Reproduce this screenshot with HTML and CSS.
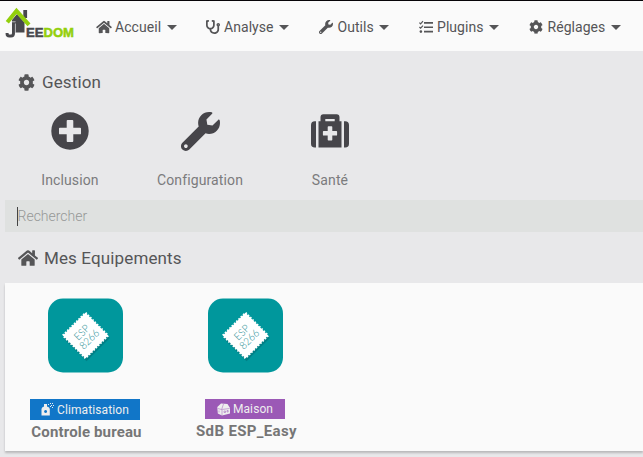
FILE: index.html
```html
<!DOCTYPE html>
<html lang="fr">
<head>
<meta charset="utf-8">
<title>Jeedom</title>
<link rel="stylesheet" href="styles.css">
</head>
<body>
<svg class="defs" aria-hidden="true">
  <symbol id="home" viewBox="0 0 576 512"><path d="M280.37 148.26L96 300.11V464a16 16 0 0 0 16 16l112.06-.29a16 16 0 0 0 15.92-16V368a16 16 0 0 1 16-16h64a16 16 0 0 1 16 16v95.64a16 16 0 0 0 16 16.05L464 480a16 16 0 0 0 16-16V300L295.67 148.26a12.19 12.19 0 0 0-15.3 0zM571.6 251.47L488 182.56V44.05a12 12 0 0 0-12-12h-56a12 12 0 0 0-12 12v72.61L318.47 43a48 48 0 0 0-61 0L4.34 251.47a12 12 0 0 0-1.6 16.9l25.5 31A12 12 0 0 0 45.15 301l235.22-193.74a12.19 12.19 0 0 1 15.3 0L530.9 301a12 12 0 0 0 16.9-1.6l25.5-31a12 12 0 0 0-1.7-16.93z"/></symbol>
  <symbol id="wrench" viewBox="0 0 512 512"><path d="M507.73 109.1c-2.24-9.03-13.54-12.09-20.12-5.51l-74.36 74.36-67.88-11.31-11.31-67.88 74.36-74.36c6.62-6.62 3.43-17.9-5.66-20.16-47.38-11.74-99.55.91-136.58 37.93-39.64 39.64-50.55 97.1-34.05 147.2L18.74 402.76c-24.99 24.99-24.99 65.51 0 90.5 24.99 24.99 65.51 24.99 90.5 0l213.21-213.21c50.12 16.71 107.47 5.68 147.37-34.22 37.07-37.07 49.7-89.32 37.91-136.73zM64 472c-13.25 0-24-10.75-24-24 0-13.26 10.75-24 24-24s24 10.74 24 24c0 13.25-10.75 24-24 24z"/></symbol>
  <symbol id="cog" viewBox="0 0 512 512"><path d="M487.4 315.7l-42.6-24.6c4.3-23.2 4.3-47 0-70.2l42.6-24.6c4.9-2.8 7.1-8.6 5.5-14-11.1-35.6-30-67.8-54.7-94.6-3.8-4.1-10-5.1-14.8-2.3L380.8 110c-17.9-15.4-38.5-27.3-60.8-35.1V25.8c0-5.6-3.9-10.5-9.4-11.7-36.7-8.2-74.3-7.8-109.2 0-5.5 1.2-9.4 6.1-9.4 11.7V75c-22.2 7.9-42.8 19.8-60.8 35.1L88.7 85.5c-4.9-2.8-11-1.9-14.8 2.3-24.7 26.7-43.6 58.9-54.7 94.6-1.7 5.4.6 11.2 5.5 14L67.3 221c-4.3 23.2-4.3 47 0 70.2l-42.6 24.6c-4.9 2.8-7.1 8.6-5.5 14 11.1 35.6 30 67.8 54.7 94.6 3.8 4.1 10 5.1 14.8 2.3l42.6-24.6c17.9 15.4 38.5 27.3 60.8 35.1v49.2c0 5.6 3.9 10.5 9.4 11.7 36.7 8.2 74.3 7.8 109.2 0 5.5-1.2 9.4-6.1 9.4-11.7v-49.2c22.2-7.9 42.8-19.8 60.8-35.1l42.6 24.6c4.9 2.8 11 1.9 14.8-2.3 24.7-26.7 43.6-58.9 54.7-94.6 1.5-5.5-.7-11.3-5.6-14.1zM256 336c-44.1 0-80-35.9-80-80s35.9-80 80-80 80 35.9 80 80-35.9 80-80 80z"/></symbol>
  <symbol id="stethoscope" viewBox="0 0 512 512"><path d="M447.1 112c-34.2.5-62.3 28.4-63 62.6-.5 24.3 12.5 45.6 32 56.8V344c0 57.3-50.2 104-112 104-60 0-109.2-44.1-111.9-99.2C265 333.8 320 269.2 320 192V36.6c0-11.4-8.1-21.3-19.3-23.5L237.8.5c-13-2.6-25.6 5.8-28.2 18.8L206.4 35c-2.6 13 5.8 25.6 18.8 28.2l30.7 6.1v121.4c0 52.9-42.2 96.7-95.1 97.2-53.4.5-96.9-42.7-96.9-96V69.4l30.7-6.1c13-2.6 21.4-15.2 18.8-28.2l-3.1-15.7C107.7 6.4 95.1-2 82.1.6L19.3 13C8.1 15.3 0 25.1 0 36.6V192c0 77.3 55.1 142 128.1 156.8C130.7 439.2 208.6 512 304 512c97 0 176-75.4 176-168V231.4c19.1-11.1 32-31.7 32-55.4 0-35.7-29.2-64.5-64.9-64zm.9 80c-8.8 0-16-7.2-16-16s7.2-16 16-16 16 7.2 16 16-7.2 16-16 16z"/></symbol>
  <symbol id="tasks" viewBox="0 0 14 14"><path d="M5 2.1h9v1.7H5zM5 6.4h9v1.7H5zM5 10.7h9v1.7H5z"/><path d="M.4 2.6l1.2 1.2L4 1.2M.4 7l1.2 1.2L4 5.6" fill="none" stroke="currentColor" stroke-width="1.2"/><circle cx="1.9" cy="11.6" r="1.3"/></symbol>
  <symbol id="plus" viewBox="0 0 38 38"><path fill-rule="evenodd" d="M19 .3a18.7 18.7 0 1 0 0 37.4a18.7 18.7 0 1 0 0-37.4zM16.600 8h4.800q.9 0 .9.9v6.800h6.800q.9 0 .9.9v4.800q0 .9-.9.9h-6.800v6.800q0 .9-.9.9h-4.800q-.9 0-.9-.9v-6.800H8.900q-.9 0-.9-.9v-4.800q0-.9.9-.9h6.800V8.900q0-.9.9-.9z"/></symbol>
  <symbol id="medkit" viewBox="0 0 38 34"><path fill-rule="evenodd" d="M7.500 7.200h2V3.200Q9.500.3 12.400.3h13.200q2.900 0 2.900 2.900v4h2V33.500h-23zM14.300 7.200h9.400V5h-9.400zM17.400 12.200q-.7 0-.7.700v4.100h-4.100q-.7 0-.7.700v3.200q0 .7.700.7h4.100v4.100q0 .7.700.7h3.200q.7 0 .7-.7v-4.100h4.100q.7 0 .7-.7v-3.200q0-.7-.7-.7h-4.100v-4.100q0-.7-.7-.7z"/><path d="M5 7.200v26.300H3.800Q0 33.500 0 29.700V11Q0 7.200 3.800 7.200zM33 7.200v26.300h1.200q3.800 0 3.800-3.800V11q0-3.800-3.800-3.800z"/></symbol>
  <symbol id="esp" viewBox="0 0 75 75">
    <rect y=".5" width="75" height="74" rx="15" fill="#00979c"/>
    <g transform="rotate(45 37.500 37.500)">
      <rect x="22" y="22" width="33" height="33" fill="#006e74" opacity=".55" transform="translate(1.500 0)"/>
      <rect x="21.500" y="21.500" width="32" height="32" fill="#fff"/>
      <rect x="21.500" y="21.500" width="32" height="32" fill="none" stroke="#fff" stroke-width="2.200" stroke-dasharray="1.600 1.600"/>
    </g>
    <g transform="translate(37.500 37.500) rotate(-45)" class="esp-text">
      <text x="-.5" y="-1.200" text-anchor="middle" textLength="17" lengthAdjust="spacingAndGlyphs">ESP</text>
      <text x="0" y="9" text-anchor="middle" textLength="23" lengthAdjust="spacingAndGlyphs">8266</text>
    </g>
  </symbol>
</svg>

<header class="navbar">
  <a class="brand">
    <svg width="72" height="38" viewBox="0 0 72 38">
      <path d="M17.300 3h3.800v8h-3.800z" fill="#48484c"/>
      <path d="M6 13L11 7L18.500 15.500V25.500H6z" fill="#48484c"/>
      <path d="M7.500 15.500v10.500q0 3-2.500 3H3.300q-2.200 0-2.200-1.900V26" fill="none" stroke="#48484c" stroke-width="3"/>
      <path d="M9.400 16.500v9.500M5.800 14.800h3.800" stroke="#d8d8da" stroke-width=".8"/>
      <path d="M1.300 15.300L10.500 3.800L23 17.800" fill="none" stroke="#93cf0c" stroke-width="4"/>
      <text class="brand-text" x="20" y="30" textLength="48" lengthAdjust="spacingAndGlyphs"><tspan fill="#48484c">EE</tspan><tspan fill="#93cf0c">DOM</tspan></text>
    </svg>
  </a>
  <nav class="menu">
    <a class="item"><svg class="ico home"><use href="#home"/></svg><span>Accueil</span><i class="caret"></i></a>
    <a class="item"><svg class="ico"><use href="#stethoscope"/></svg><span>Analyse</span><i class="caret"></i></a>
    <a class="item"><svg class="ico"><use href="#wrench"/></svg><span>Outils</span><i class="caret"></i></a>
    <a class="item"><svg class="ico"><use href="#tasks"/></svg><span>Plugins</span><i class="caret"></i></a>
    <a class="item"><svg class="ico"><use href="#cog"/></svg><span>Réglages</span><i class="caret"></i></a>
  </nav>
</header>

<main>
  <h2 class="legend"><svg class="legend-cog"><use href="#cog"/></svg><span>Gestion</span></h2>
  <div class="actions">
    <a class="action"><svg width="38" height="38"><use href="#plus"/></svg><span>Inclusion</span></a>
    <a class="action"><svg width="39" height="39"><use href="#wrench"/></svg><span>Configuration</span></a>
    <a class="action"><svg width="38" height="34"><use href="#medkit"/></svg><span>Santé</span></a>
  </div>
  <div class="search"><i class="cursor"></i><span>Rechercher</span></div>
  <h2 class="legend equipment-title"><svg class="legend-home"><use href="#home"/></svg><span>Mes Equipements</span></h2>
  <section class="equipment">
    <article class="card">
      <svg width="75" height="75"><use href="#esp"/></svg>
      <span class="tag climate"><svg width="13" height="13" viewBox="0 0 13 13"><path fill-rule="evenodd" d="M3 1h3v2.500q2.800.6 2.800 2.500v6.500H.5V6q0-1.900 2.500-2.500zM4.600 7a1.500 1.500 0 1 0 .01 0z"/><path d="M7 1h1v1H7zM9 0h1v1H9zM11 0h1v1h-1zM10 2h1v1h-1zM12 2h1v1h-1zM9 3h1v1H9zM11 4h1v1h-1z"/></svg><span>Climatisation</span></span>
      <strong>Controle bureau</strong>
    </article>
    <article class="card">
      <svg width="75" height="75"><use href="#esp"/></svg>
      <span class="tag house"><svg width="13" height="13" viewBox="0 0 13 13"><path d="M.3 4L4 .5l6.500.5L13 5v5.500L5 12.500.8 10.500z"/><path d="M.8 5.500l3.800 1 8-1M5 7v5M4.600 6.500L6.500 1M2 7.500v2M7 8h1.500v1.500H7zM10 7.500h1.200V9H10z" fill="none" stroke="#9b59b6" stroke-width=".5"/></svg><span>Maison</span></span>
      <strong class="spaced">SdB ESP_Easy</strong>
    </article>
  </section>
</main>
</body>
</html>
```

FILE: styles.css
```css
* { box-sizing: border-box; }

body {
  margin: 0;
  height: 457px;
  overflow: hidden;
  background: #e8e8ea;
  color: #555557;
  font: 14px/20px Roboto, sans-serif;
}

svg { display: block; fill: currentColor; flex: none; }
.defs { position: absolute; width: 0; height: 0; }

.navbar {
  display: flex;
  height: 51px;
  border-top: 1px solid #060408;
  background: #fafafa;
}
.brand { width: 90px; padding: 6px 0 0 6px; }
.brand svg { overflow: visible; }
.brand-text { font: bold 12.500px "Liberation Sans", sans-serif; stroke-width: .5px; }
.brand-text tspan:first-child { stroke: #48484c; }
.brand-text tspan:last-child { stroke: #93cf0c; }
.menu {
  display: grid;
  grid-template-columns: 110px 113.500px 99.500px 110.500px 100px;
  padding-left: 5.500px;
}
.item { display: flex; align-items: center; height: 52px; white-space: nowrap; letter-spacing: .05px; }
.ico { width: 14px; height: 14px; margin-right: 4.500px; }
.ico.home { width: 16px; margin-right: 3.500px; }
.caret {
  margin-left: 5.500px;
  border: solid transparent;
  border-width: 5px 5px 0;
  border-top-color: #555557;
}

.legend {
  display: flex;
  align-items: center;
  height: 24px;
  margin: 19px 0 0 18px;
  font-size: 17px;
  font-weight: 400;
  letter-spacing: .13px;
}
.legend-cog { width: 17px; height: 17px; margin-right: 7px; }
.legend-home { width: 20px; height: 18px; margin-right: 6px; }

.actions {
  display: grid;
  grid-template-columns: repeat(3, 130px);
  height: 106px;
  padding: 17px 0 0 5px;
}
.action {
  display: grid;
  grid-template-rows: 40px 20px;
  row-gap: 19px;
  place-items: center;
  color: #7b7b7d;
  letter-spacing: .12px;
}
.action svg { color: #46454a; }

.search {
  display: flex;
  align-items: center;
  height: 32px;
  margin-left: 5px;
  padding-left: 12px;
  background: #dfe1e0;
  color: #969897;
  font-weight: 300;
}
.search span { margin-left: -.5px; }
.cursor { width: 1px; height: 19px; background: #444; }

.equipment-title { margin-top: 14px; }

.equipment {
  display: flex;
  height: 168px;
  margin: 13px 0 0 5px;
  background: #fafafa;
  box-shadow: 0 2px 2px #b9b9bb;
}
.card {
  display: flex;
  flex-direction: column;
  align-items: center;
  width: 160px;
  padding-top: 14.500px;
  color: #767676;
}
.card strong { margin-left: 3px; font-size: 15px; line-height: 20px; letter-spacing: .15px; }
.card strong.spaced { letter-spacing: .35px; }
.tag {
  display: flex;
  align-items: center;
  justify-content: center;
  gap: 3px;
  height: 21px;
  margin: 26.500px 0 2px;
  color: #eee;
  font-size: 12px;
  letter-spacing: .1px;
}
.climate { width: 110px; background: #1176c8; }
.house { width: 80px; height: 20px; background: #9b59b6; }
.esp-text { font: 300 10.500px Lato, sans-serif; fill: #278e94; }
```
